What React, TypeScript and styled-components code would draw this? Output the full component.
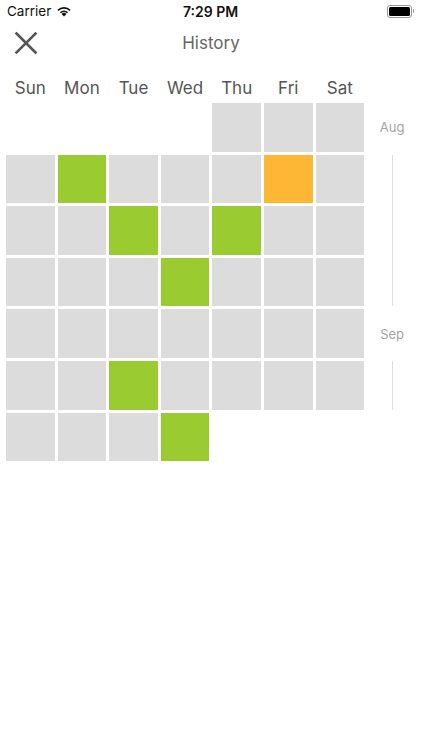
import React from "react";
import styled, { createGlobalStyle } from "styled-components";

const GlobalStyle = createGlobalStyle`
  html, body {
    margin: 0;
    padding: 0;
    background: #ffffff;
  }
  body {
    font-family: "Inter", "Noto Sans", "Liberation Sans", sans-serif;
  }
`;

type Status = "none" | "done" | "partial";

const CELL = 48.6;
const GAP = 3;

// each week: column index of the first day, then the day states
const weeks: { start: number; days: Status[] }[] = [
  { start: 4, days: ["none", "none", "none"] },
  { start: 0, days: ["none", "done", "none", "none", "none", "partial", "none"] },
  { start: 0, days: ["none", "none", "done", "none", "done", "none", "none"] },
  { start: 0, days: ["none", "none", "none", "done", "none", "none", "none"] },
  { start: 0, days: ["none", "none", "none", "none", "none", "none", "none"] },
  { start: 0, days: ["none", "none", "done", "none", "none", "none", "none"] },
  { start: 0, days: ["none", "none", "none", "done"] },
];

const months: { label: string; row: number; lineFrom: number; lineSpan: number }[] = [
  { label: "Aug", row: 1, lineFrom: 2, lineSpan: 3 },
  { label: "Sep", row: 5, lineFrom: 6, lineSpan: 1 },
];

const dayNames = ["Sun", "Mon", "Tue", "Wed", "Thu", "Fri", "Sat"];

const Screen = styled.div`
  width: 422px;
  height: 750px;
  background: #fff;
  overflow: hidden;
`;

const StatusBar = styled.div`
  height: 22px;
  display: grid;
  grid-template-columns: 1fr auto 1fr;
  align-items: center;
  padding: 0 8px 0 7px;
  font-size: 13.5px;
  color: #111;
`;

const Carrier = styled.div`
  display: flex;
  align-items: center;
  gap: 5px;
`;

const Time = styled.div`
  font-weight: 600;
  font-size: 14px;
`;

const Battery = styled.div`
  justify-self: end;
  display: flex;
  align-items: center;
`;

const BatteryBody = styled.div`
  width: 21px;
  height: 9px;
  border: 1px solid #9a9a9a;
  border-radius: 3px;
  padding: 1px;
  display: flex;
`;

const BatteryFill = styled.div`
  flex: 1;
  background: #000;
  border-radius: 1.5px;
`;

const BatteryNub = styled.div`
  width: 1.5px;
  height: 4px;
  background: #9a9a9a;
  margin-left: 1px;
  border-radius: 0 1px 1px 0;
`;

const NavBar = styled.div`
  height: 42px;
  display: grid;
  grid-template-columns: 60px 1fr 60px;
  align-items: center;
`;

const CloseButton = styled.button`
  border: 0;
  background: none;
  padding: 0 0 0 14px;
  display: flex;
  align-items: center;
  cursor: pointer;
`;

const Title = styled.div`
  text-align: center;
  font-size: 17px;
  color: #666;
`;

const Calendar = styled.div`
  padding: 12px 0 0 6px;
`;

const Columns = styled.div`
  display: grid;
  grid-template-columns: repeat(7, ${CELL}px) 50px;
  column-gap: ${GAP}px;
`;

const DayHeader = styled(Columns)`
  margin-bottom: 3px;
`;

const DayName = styled.div`
  text-align: center;
  font-size: 17px;
  line-height: 24px;
  color: #555;
`;

const Body = styled(Columns)`
  grid-auto-rows: ${CELL}px;
  row-gap: ${GAP}px;
`;

const Cell = styled.div<{ $status: Status; $col: number; $row: number }>`
  grid-column: ${({ $col }) => $col};
  grid-row: ${({ $row }) => $row};
  background: ${({ $status }) =>
    $status === "done" ? "#9acc32" : $status === "partial" ? "#fdb734" : "#dcdcdc"};
`;

const MonthLabel = styled.div<{ $row: number }>`
  grid-column: 8;
  grid-row: ${({ $row }) => $row};
  display: flex;
  align-items: center;
  justify-content: center;
  font-size: 13px;
  color: #a4a4a4;
`;

const MonthLine = styled.div<{ $row: number; $span: number }>`
  grid-column: 8;
  grid-row: ${({ $row, $span }) => `${$row} / span ${$span}`};
  justify-self: center;
  width: 1px;
  background: #dedede;
`;

const WifiIcon = () => (
  <svg width="16" height="12" viewBox="0 0 15 11">
    <path d="M7.5 10.6 L5.2 8.2 A3.3 3.3 0 0 1 9.8 8.2 Z" fill="#111" />
    <path d="M3.6 6.6 A5.6 5.6 0 0 1 11.4 6.6 L10.3 7.7 A4.1 4.1 0 0 0 4.7 7.7 Z" fill="#111" />
    <path d="M1.3 4.3 A8.9 8.9 0 0 1 13.7 4.3 L12.6 5.4 A7.4 7.4 0 0 0 2.4 5.4 Z" fill="#111" />
  </svg>
);

const CloseIcon = () => (
  <svg width="24" height="24" viewBox="0 0 24 24">
    <path d="M2.5 2.5 L21.5 21.5 M21.5 2.5 L2.5 21.5" stroke="#555" strokeWidth="2.6" strokeLinecap="square" />
  </svg>
);

export default function App() {
  return (
    <Screen>
      <GlobalStyle />
      <StatusBar>
        <Carrier>
          Carrier
          <WifiIcon />
        </Carrier>
        <Time>7:29 PM</Time>
        <Battery>
          <BatteryBody>
            <BatteryFill />
          </BatteryBody>
          <BatteryNub />
        </Battery>
      </StatusBar>
      <NavBar>
        <CloseButton aria-label="Close">
          <CloseIcon />
        </CloseButton>
        <Title>History</Title>
        <div />
      </NavBar>
      <Calendar>
        <DayHeader>
          {dayNames.map((d) => (
            <DayName key={d}>{d}</DayName>
          ))}
        </DayHeader>
        <Body>
          {weeks.map((week, w) =>
            week.days.map((status, i) => (
              <Cell key={`${w}-${i}`} $status={status} $col={week.start + i + 1} $row={w + 1} />
            ))
          )}
          {months.map((m) => (
            <React.Fragment key={m.label}>
              <MonthLabel $row={m.row}>{m.label}</MonthLabel>
              <MonthLine $row={m.lineFrom} $span={m.lineSpan} />
            </React.Fragment>
          ))}
        </Body>
      </Calendar>
    </Screen>
  );
}
